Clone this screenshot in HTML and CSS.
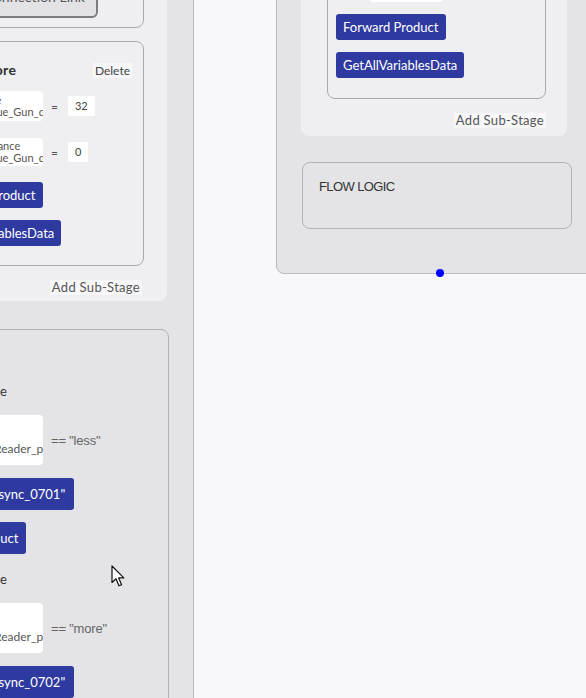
FILE: index.html
```html
<!DOCTYPE html>
<html>
<head>
<meta charset="utf-8">
<link rel="stylesheet" href="styles.css">
</head>
<body>
<div class="canvas">
  <div class="node node-left">
    <div class="card card-left">
      <div class="sub sub-a">
        <div class="link-btn">Connection Link</div>
      </div>
      <div class="sub sub-b">
        <div class="sub-head">
          <span class="sub-title">Torque Store</span>
          <span class="del">Delete</span>
        </div>
        <div class="row row-1">
          <div class="namebox nb-1"><div class="nl">Torque Value</div><div class="nl nl-2">Current_Torque_Gun_quantity</div></div>
          <span class="eq">=</span>
          <div class="valbox">32</div>
        </div>
        <div class="row row-2">
          <div class="namebox nb-2"><div class="nl">Angles Tolerance</div><div class="nl nl-2">Current_Torque_Gun_quantity</div></div>
          <span class="eq">=</span>
          <div class="valbox">0</div>
        </div>
        <div class="btn btn-first">Forward Product</div>
        <div class="btn btn-next">GetAllVariablesData</div>
      </div>
      <div class="add">Add Sub-Stage</div>
    </div>
    <div class="flow flow-left">
      <div class="flow-title">FLOW LOGIC</div>
      <div class="cond-label">If Variable Value</div>
      <div class="row cond-row">
        <div class="namebox cond-box"><div class="nl">Variable</div><div class="nl cl-2">Scan_Barcode_Reader_position</div></div>
        <span class="cmp">== "less"</span>
      </div>
      <div class="btn btn-tall btn-goto">Goto Stage "Async_0701"</div>
      <div class="btn btn-tall btn-fwd">Forward Product</div>
      <div class="cond-label cond-label-2">If Variable Value</div>
      <div class="row cond-row">
        <div class="namebox cond-box"><div class="nl">Variable</div><div class="nl cl-2">Scan_Barcode_Reader_position</div></div>
        <span class="cmp">== "more"</span>
      </div>
      <div class="btn btn-tall btn-goto">Goto Stage "Async_0702"</div>
    </div>
  </div>

  <div class="node node-right">
    <div class="card card-right">
      <div class="sub sub-r">
        <div class="strip"></div>
        <div class="btn btn-first-r">Forward Product</div>
        <div class="btn btn-next">GetAllVariablesData</div>
      </div>
      <div class="add add-r">Add Sub-Stage</div>
    </div>
    <div class="flow flow-right">
      <div class="flow-title flow-title-r">FLOW LOGIC</div>
    </div>
  </div>

  <div class="port"></div>

  <svg class="cursor" width="14" height="23" viewBox="0 0 14 23">
    <path d="M1 1 L1 17.5 L5 13.8 L8 20.8 L10.6 19.7 L7.7 12.9 L12.8 12.9 Z" fill="#ffffff" stroke="#111111" stroke-width="1.2" stroke-linejoin="round"/>
  </svg>
</div>
</body>
</html>
```

FILE: styles.css
```css
html, body {
  margin: 0;
  padding: 0;
}

body {
  width: 586px;
  height: 698px;
  overflow: hidden;
  background: #f8f7fa;
  font-family: Lato, "Open Sans", sans-serif;
  color: #333;
}

.canvas {
  position: relative;
  width: 586px;
  height: 698px;
  overflow: hidden;
  background: #f8f7fa;
}

.node {
  position: absolute;
  box-sizing: border-box;
  background: #e4e3e6;
  border: 1px solid #bcbbc0;
  border-radius: 8px;
  display: flex;
  flex-direction: column;
  align-items: flex-start;
}

.node-left {
  left: -125px;
  top: -14px;
  width: 319px;
  height: 760px;
  padding: 0 26px 0 24px;
}

.node-right {
  left: 276px;
  top: -60px;
  width: 328px;
  padding: 0 40px 44px 24px;
}

.card {
  box-sizing: border-box;
  background: #efeff2;
  border-radius: 8px;
  display: flex;
  flex-direction: column;
  align-items: stretch;
}

.card-left {
  width: 267px;
  padding: 0 23px 6px 24px;
}

.card-right {
  width: 266px;
  padding: 0 21px 8px 26px;
}

.sub {
  border: 1px solid #a9a8ad;
  border-radius: 8px;
  display: flex;
  flex-direction: column;
  align-items: flex-start;
}

.sub-a {
  padding: 0 11px 9px 8px;
}

.link-btn {
  box-sizing: border-box;
  width: 165px;
  height: 30px;
  border: 2px solid #7d7c80;
  border-radius: 6px;
  background: #e3e2e5;
  color: #555;
  font-size: 14px;
  line-height: 13px;
  padding: 0 11px 0;
  text-align: right;
  overflow: hidden;
}

.sub-b {
  margin-top: 13px;
  padding: 20px 11px 19px 8px;
}

.sub-head {
  align-self: stretch;
  height: 17px;
  display: flex;
  justify-content: space-between;
  align-items: center;
}

.sub-title {
  font-weight: bold;
  font-size: 14px;
  letter-spacing: 0.3px;
  line-height: 15px;
  margin-bottom: 3px;
  color: #2e2e2e;
}

.del {
  font-size: 12px;
  line-height: 15px;
  color: #444;
  background: #f7f7f9;
  padding: 0 2px;
}

.row {
  display: flex;
  align-items: center;
}

.row-1 {
  margin-top: 12px;
}

.row-2 {
  margin-top: 17px;
}

.namebox {
  box-sizing: border-box;
  width: 110px;
  background: #ffffff;
  border-radius: 4px;
  overflow: hidden;
  white-space: nowrap;
  font-size: 11px;
  line-height: 12px;
  color: #555;
}

.nl {
  overflow: hidden;
}

.nl-2 {
  margin-left: -6px;
}

.nb-1 {
  height: 30px;
  padding: 3px 0 3px 6px;
}

.nb-2 {
  height: 28px;
  padding: 2px 0 2px 6px;
}

.eq {
  margin: 0 10px 0 8px;
  font-size: 12px;
  color: #555;
}

.valbox {
  background: #ffffff;
  height: 20px;
  line-height: 20px;
  padding: 0 7px;
  font-size: 11px;
  color: #444;
  border-radius: 2px;
}

.btn {
  background: #2e3a9f;
  color: #ffffff;
  font-size: 13px;
  height: 26px;
  line-height: 26px;
  padding: 0 7px;
  border-radius: 3px;
  white-space: nowrap;
}

.btn-first {
  margin-top: 16px;
}

.btn-next {
  margin-top: 12px;
}

.add {
  align-self: flex-end;
  margin-top: 14px;
  margin-right: 2px;
  font-size: 13px;
  letter-spacing: 0.3px;
  line-height: 15px;
  color: #555;
  background: #f7f7f9;
  padding: 0 2px;
}

.add-r {
  margin-right: 0;
}

.flow {
  box-sizing: border-box;
  border: 1px solid #b3b2b7;
  border-radius: 8px;
  min-height: 67px;
  display: flex;
  flex-direction: column;
  align-items: flex-start;
}

.flow-left {
  width: 268px;
  margin: 28px 0 0 1px;
  padding: 17px 14px 20px;
}

.flow-right {
  width: 270px;
  margin: 26px 0 0 1px;
  padding: 17px 16px 20px;
}

.flow-title {
  font-family: "Liberation Sans", Arial, sans-serif;
  font-size: 13px;
  letter-spacing: -0.6px;
  line-height: 14px;
  color: #333;
  margin-left: 2px;
}

.flow-title-r {
  margin-left: 0;
}

.cond-label {
  margin-top: 23px;
  font-size: 13px;
  line-height: 14px;
  color: #333;
}

.cond-label-2 {
  margin-top: 18px;
}

.cond-row {
  margin-top: 17px;
}

.cond-box {
  width: 127px;
  height: 50px;
  padding: 13px 0 0 6px;
  font-size: 12px;
  line-height: 14px;
}

.cl-2 {
  margin-left: -7px;
}

.cmp {
  margin-left: 8px;
  font-family: "Liberation Sans", Arial, sans-serif;
  font-size: 13px;
  letter-spacing: -0.2px;
  color: #666;
}

.btn-tall {
  height: 32px;
  line-height: 32px;
  padding: 0 9px 0 3px;
}

.btn-goto {
  margin-top: 13px;
}

.btn-fwd {
  margin-top: 12px;
  padding: 0 7px;
}

.sub-r {
  padding: 9px 10px 20px 8px;
}

.strip {
  width: 73px;
  height: 51px;
  margin-left: 34px;
  background: #ffffff;
  border-radius: 3px;
}

.btn-first-r {
  margin-top: 12px;
}

.port {
  position: absolute;
  left: 436px;
  top: 269px;
  width: 8px;
  height: 8px;
  border-radius: 50%;
  background: #0000ff;
}

.cursor {
  position: absolute;
  left: 111px;
  top: 565px;
}
```
